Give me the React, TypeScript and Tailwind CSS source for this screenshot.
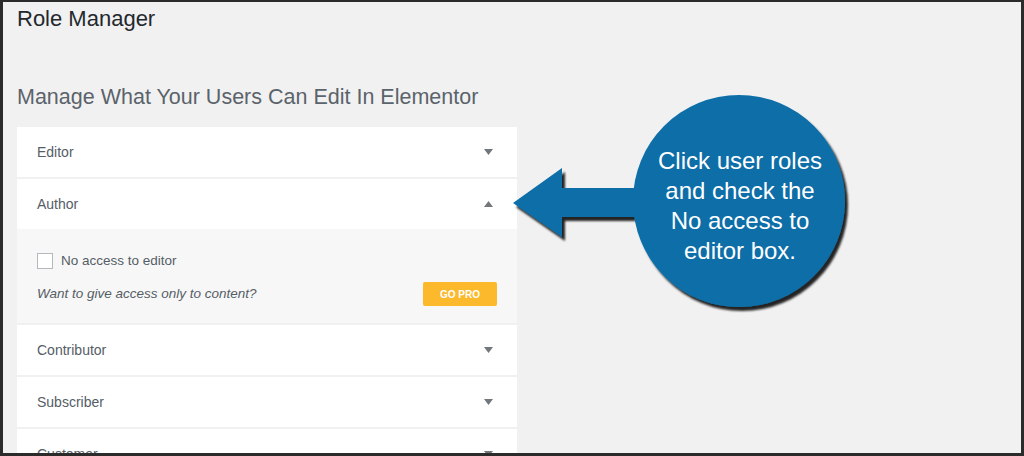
const roles = [
  { name: "Editor", open: false },
  { name: "Author", open: true },
  { name: "Contributor", open: false },
  { name: "Subscriber", open: false },
  { name: "Customer", open: false },
];

const Caret = ({ up }: { up?: boolean }) => (
  <svg width="9" height="6" viewBox="0 0 9 6" className={up ? "rotate-180" : ""}>
    <path d="M0 0 L9 0 L4.5 6 Z" fill="#72777c" />
  </svg>
);

const RoleRow = ({ name, open }: { name: string; open: boolean }) => {
  return (
    <div className="flex flex-col">
      <div className="flex h-[50px] shrink-0 items-center justify-between bg-white pl-5 pr-[24px]">
        <span className="text-[14px] text-[#555d66]">{name}</span>
        <Caret up={open} />
      </div>
      {open && (
        <div className="flex h-[94px] flex-col bg-[#f7f7f7] px-5 pt-[22px]">
          <label className="flex items-center gap-2">
            <span className="h-4 w-4 border border-[#b4b9be] bg-white" />
            <span className="text-[13.5px] text-[#555d66]">No access to editor</span>
          </label>
          <div className="mt-[11px] flex items-center justify-between">
            <span className="text-[13.5px] italic text-[#555d66]">
              Want to give access only to content?
            </span>
            <button className="flex h-[24px] w-[74px] items-center justify-center rounded-[2px] bg-[#fcb92c] text-[10px] font-bold uppercase text-white">
              Go Pro
            </button>
          </div>
        </div>
      )}
    </div>
  );
};

const Callout = () => (
  <div className="absolute left-0 top-0 h-[456px] w-[1024px]">
    <svg width="1024" height="456" className="absolute left-0 top-0">
      <defs>
        <filter id="sh" x="-20%" y="-20%" width="140%" height="140%">
          <feDropShadow dx="3" dy="4" stdDeviation="1.3" floodColor="#000" floodOpacity="0.85" />
        </filter>
      </defs>
      <g filter="url(#sh)" fill="#0a6ea8">
        <path d="M513 203 L562 168 L562 188 L650 188 L650 217 L562 217 L562 237 Z" />
        <circle cx="739" cy="201" r="106" />
      </g>
    </svg>
    <div className="absolute left-[629px] top-[146px] w-[222px] text-center font-['Liberation_Sans',Arial,sans-serif] text-[24px] leading-[30px] text-white">
      Click user roles
      <br />
      and check the
      <br />
      No access to
      <br />
      editor box.
    </div>
  </div>
);

export default function App() {
  return (
    <div className="relative h-[456px] w-[1024px] overflow-hidden font-['Liberation_Sans',Arial,sans-serif]">
      <div className="flex h-full flex-col overflow-hidden border-b-[3px] border-l-[3px] border-r-[3px] border-t-2 border-[#2b2b2b] bg-[#f1f1f1] pl-[14px]">
        <h1 className="mt-[3px] text-[22px] leading-[28px] text-[#23282d]">Role Manager</h1>
        <h2 className="mt-[50px] text-[21.5px] leading-[28px] text-[#5b636b]">
          Manage What Your Users Can Edit In Elementor
        </h2>
        <div className="mt-[16px] flex w-[500px] flex-col gap-[2px]">
          {roles.map((r) => (
            <RoleRow key={r.name} name={r.name} open={r.open} />
          ))}
        </div>
      </div>
      <Callout />
    </div>
  );
}
